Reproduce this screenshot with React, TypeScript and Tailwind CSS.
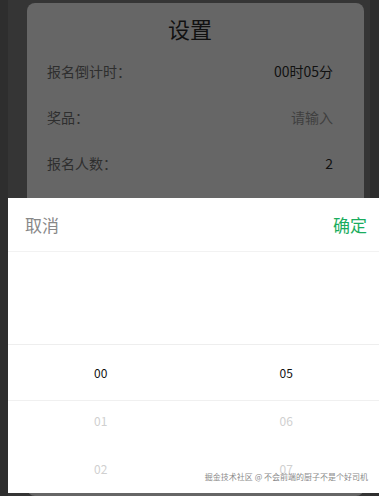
const hours = ["00", "01", "02"];
const minutes = ["05", "06", "07"];

const rows = [
    { label: "报名倒计时：", value: "00时05分", muted: false },
    { label: "奖品：", value: "请输入", muted: true },
    { label: "报名人数：", value: "2", muted: false },
];

const Column = ({ items }: { items: string[] }) => {
    return (
        <div className="flex-1 flex flex-col items-center pt-[4px]">
            {items.map((v, i) => (
                <div
                    key={v}
                    className={
                        i === 0
                            ? "h-[48px] flex items-center text-[12px] text-[#111]"
                            : "h-[48px] flex items-center text-[12px] text-[#d0d0d0]"
                    }
                >
                    {v}
                </div>
            ))}
        </div>
    );
};

export default function App() {
    return (
        <div
            className="relative w-[379px] h-[496px] overflow-hidden bg-[#2e2e2e]"
            style={{ fontFamily: '"Noto Sans CJK SC", "Noto Sans", sans-serif' }}
        >
            <div className="ml-[8px] mr-[9px] h-full bg-[#353535] pt-[3px] pl-[19px] pr-[6px]">
                <div className="h-full rounded-[8px] bg-[#666666] pl-[20px] pr-[31px]">
                    <div className="pt-[10px] text-center text-[22px] leading-[30px] text-[#111]">设置</div>
                    <div className="mt-[5px] flex flex-col">
                        {rows.map((r) => (
                            <div key={r.label} className="h-[46px] flex items-center justify-between text-[14px]">
                                <span className="text-[#2e2e2e]">{r.label}</span>
                                <span className={r.muted ? "text-[#3f3f3f]" : "text-[#111]"}>{r.value}</span>
                            </div>
                        ))}
                    </div>
                </div>
            </div>

            {/* bottom sheet */}
            <div className="absolute left-[8px] right-0 top-[198px] bottom-[3px] bg-white flex flex-col">
                <div className="h-[54px] flex items-center justify-between pl-[17px] pr-[12px] border-b border-[#f2f2f2] text-[17px]">
                    <span className="text-[#888]">取消</span>
                    <span className="text-[#1aad5e]">确定</span>
                </div>
                <div className="h-[93px] border-b border-[#eeeeee]" />
                <div className="relative flex">
                    <div className="absolute left-0 right-0 top-[55px] border-t border-[#f0f0f0]" />
                    <Column items={hours} />
                    <Column items={minutes} />
                </div>
                <div className="absolute right-[11px] bottom-[10px] text-[8px] text-[#8a8a8a]">
                    掘金技术社区 @ 不会前端的厨子不是个好司机
                </div>
            </div>
        </div>
    );
}
